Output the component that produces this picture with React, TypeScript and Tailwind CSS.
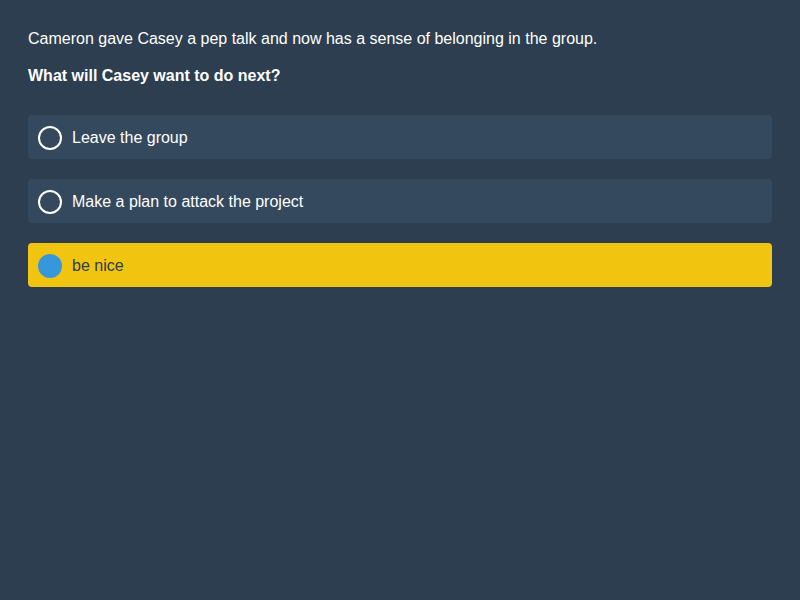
import React, { useState } from 'react';

const options = ['Leave the group', 'Make a plan to attack the project', 'be nice'];

export default function App() {
  const [selected, setSelected] = useState(2);

  return (
    <div className="min-h-screen w-full bg-[#2c3e50] px-[28px] pt-[29px] font-['Liberation_Sans',Arial,sans-serif] text-white">
      <p className="text-[16px] leading-[20px]">
        Cameron gave Casey a pep talk and now has a sense of belonging in the group.
      </p>
      <p className="mt-[17px] text-[16px] font-bold leading-[20px]">What will Casey want to do next?</p>

      <div className="mt-[29px] flex flex-col gap-[20px]">
        {options.map((opt, i) => {
          const active = i === selected;
          return (
            <button
              key={opt}
              onClick={() => setSelected(i)}
              className={`flex h-[44px] w-full items-center gap-[10px] rounded-[4px] pl-[10px] pt-[1px] text-left text-[16px] ${
                active ? 'bg-[#f1c40f] text-[#2c3e50]' : 'bg-[#34495e] text-white'
              }`}
            >
              {active ? (
                <span className="h-[24px] w-[24px] shrink-0 rounded-full bg-[#3498db]" />
              ) : (
                <span className="h-[24px] w-[24px] shrink-0 rounded-full border-2 border-white" />
              )}
              <span>{opt}</span>
            </button>
          );
        })}
      </div>
    </div>
  );
}
